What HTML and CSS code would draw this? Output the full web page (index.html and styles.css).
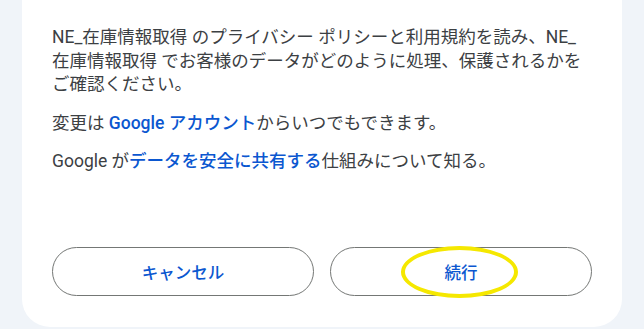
FILE: index.html
```html
<!DOCTYPE html>
<html>
    <head>
        <title>NE_在庫情報取得</title>
        <link rel="stylesheet" href="styles.css">
    </head>
    <body>
        <div class="card">
            <div class="terms">
                <p>NE_在庫情報取得 のプライバシー ポリシーと利用規約を読み、NE_在庫情報取得 でお客様のデータがどのように処理、保護されるかをご確認ください。</p>
                <p>変更は <a href="#">Google アカウント</a>からいつでもできます。</p>
                <p>Google が<a href="#">データを安全に共有する</a>仕組みについて知る。</p>
            </div>
            <div class="actions">
                <button class="btn">キャンセル</button>
                <button class="btn btn-continue">続行<span class="mark"></span></button>
            </div>
        </div>
    </body>
</html>
```

FILE: styles.css
```css
body {
    margin: 0;
    background: #f0f4f9;
    font-family: Roboto, "Noto Sans CJK JP", sans-serif;
}
.card {
    margin: 0 22px;
    height: 327px;
    box-sizing: border-box;
    padding: 26px 30px 31px;
    background: white;
    border-radius: 0 0 28px 28px;
    display: flex;
    flex-direction: column;
}
.terms {
    margin-right: 4px;
}
.terms p {
    margin: 0 0 15px 0;
    font-size: 17.5px;
    line-height: 23.5px;
    color: #3c4043;
}
.terms a {
    color: #0b57d0;
    text-decoration: none;
    font-weight: 500;
}
.actions {
    margin-top: auto;
    display: flex;
    gap: 16px;
}
.btn {
    flex: 1;
    height: 49px;
    background: white;
    border: 1px solid #747775;
    border-radius: 25px;
    font-family: Roboto, "Noto Sans CJK JP", sans-serif;
    font-size: 16.5px;
    font-weight: 500;
    color: #0b57d0;
    position: relative;
}
.mark {
    position: absolute;
    left: 50%;
    top: 50%;
    width: 109px;
    height: 44px;
    margin: -26px 0 0 -60px;
    border: 4px solid #f5e800;
    border-radius: 50%;
}
```
